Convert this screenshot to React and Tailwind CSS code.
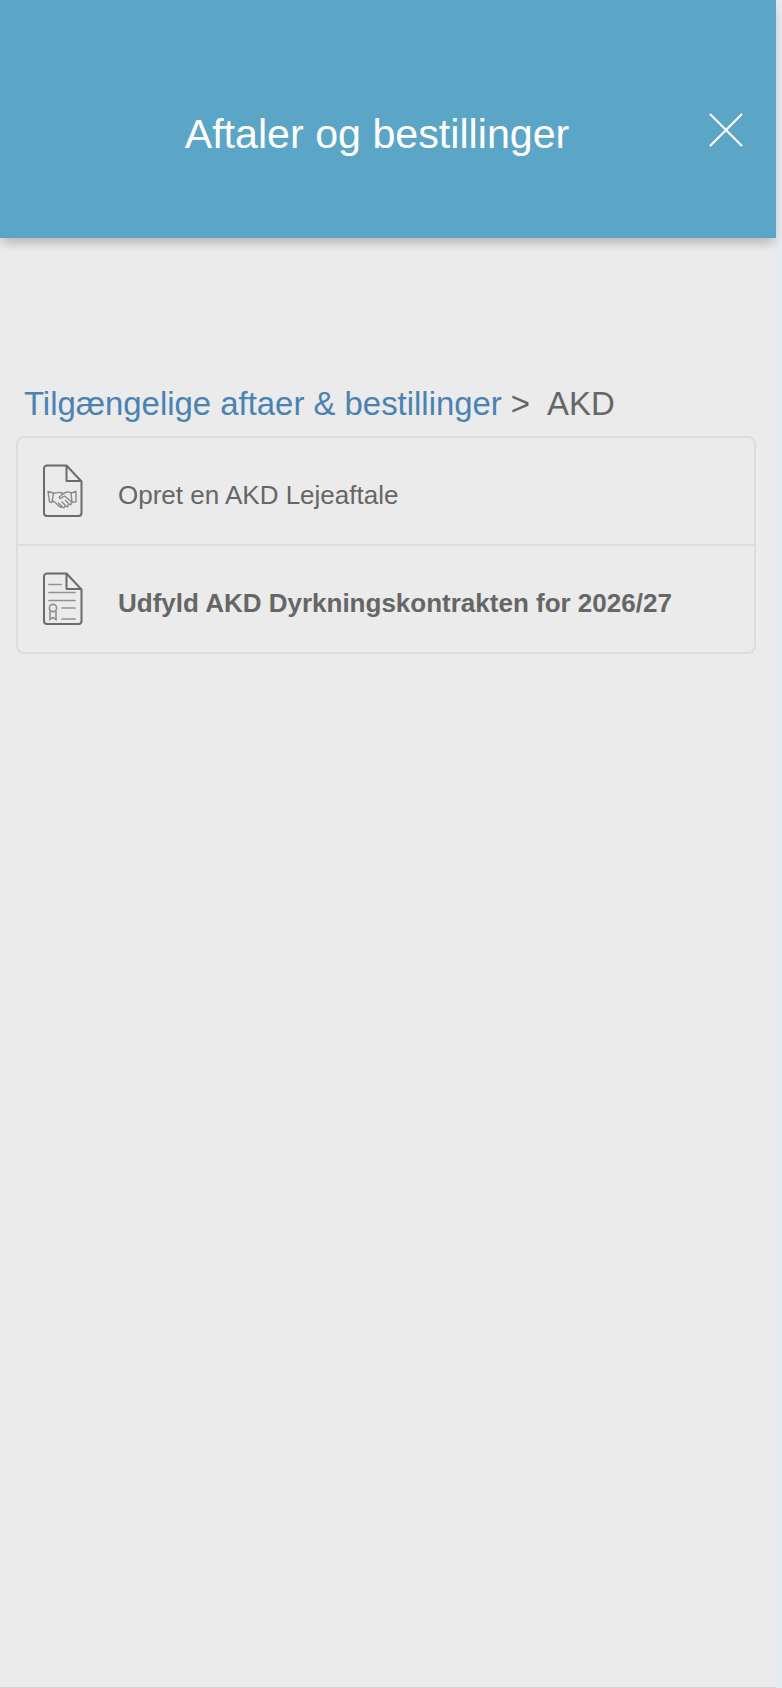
const DocBase = ({ children }) => (
  <svg width="42" height="54" viewBox="0 0 42 54" fill="none" className="shrink-0">
    <path d="M5 1.5h19.5L39.5 17.5V49a3 3 0 0 1-3 3H5a3 3 0 0 1-3-3V4.5a3 3 0 0 1 3-3z" stroke="#6b6b6b" strokeWidth="2" strokeLinejoin="round" />
    <path d="M24.5 1.5V17H39.5" stroke="#6b6b6b" strokeWidth="2" strokeLinejoin="round" />
    {children}
  </svg>
);

const HandshakeDoc = () => (
  <DocBase>
    <g stroke="#8a8a8a" strokeWidth="1.4" strokeLinejoin="round" strokeLinecap="round" fill="none">
      <path d="M6 27.5l5.5 1.5-1.5 9.5-2.5-.6z" />
      <path d="M34 27.5l-5 1.5 1 9.5 4-.6z" />
      <path d="M11.5 29.5c2.5-.4 4.5-1.5 6.5-1 1.5.4 2.5 1 3.5 1l3.5-1.5c1.5-.5 2.5.5 4 1" />
      <path d="M21.5 29.5l-4 3.2c-.8 1 .6 2.2 1.6 1.5l3.4-2.2 7.5 6" />
      <path d="M10 37l2 .5 6 5.5c1 .8 2.2-.2 1.6-1.2M16.5 39l4.5 4.5c1 .8 2.2-.3 1.5-1.3M20 38l4.5 4.5c1 .7 2.2-.4 1.4-1.5M23.5 36.5l4 4c1 .7 2.2-.4 1.5-1.5" />
    </g>
  </DocBase>
);

const ContractDoc = () => (
  <DocBase>
    <g stroke="#929292" strokeWidth="1.7" strokeLinecap="round" fill="none">
      <path d="M7 12.5h12M7 20.5h26M7 28.5h26M20 36h13M20 47h13" />
      <circle cx="11" cy="36" r="3.6" />
      <path d="M8 39.5V47.5l3-2 3 2v-8" />
    </g>
  </DocBase>
);

const Row = ({ icon, bold, last, children }) => (
  <div className={`flex items-center pl-[24px] ${last ? "h-[106px]" : "h-[108px] border-b-2 border-[#dcdcdc]"}`}>
    {icon}
    <span className={`ml-[34px] mt-[9px] text-[26px] text-[#666] ${bold ? "font-bold" : ""}`}>{children}</span>
  </div>
);

export default function App() {
  return (
    <div className="w-[782px] h-[1688px] bg-[#e6eaf4] font-['Liberation_Sans',Arial,sans-serif] overflow-hidden">
      <div className="w-[776px] h-[1687px] bg-[#ebebeb] border-b border-[#d4d4d4] box-content">
        <header className="relative h-[238px] bg-[#5ba6c7] flex items-center justify-center pr-[22px] pt-[32px] shadow-[0_7px_10px_-2px_rgba(0,0,0,0.22)]">
          <h1 className="text-[41.2px] leading-none text-white font-normal">Aftaler og bestillinger</h1>
          <svg width="34" height="34" viewBox="0 0 34 34" className="absolute left-[709px] top-[113px]" stroke="#fff" strokeWidth="2.2" fill="none">
            <path d="M1 1l32 32M33 1L1 33" />
          </svg>
        </header>
        <div className="pt-[146px] px-[16px]">
          <p className="pl-[8px] text-[32.9px] leading-[40px] text-[#666]">
            <span className="text-[#4a82b4]">Tilgængelige aftaer &amp; bestillinger</span>
            <span className="ml-[9px]">&gt;</span>
            <span className="ml-[17px]">AKD</span>
          </p>
          <div className="mt-[12px] w-[740px] border-2 border-[#dcdcdc] rounded-[8px]">
            <Row icon={<HandshakeDoc />}>Opret en AKD Lejeaftale</Row>
            <Row icon={<ContractDoc />} bold last>Udfyld AKD Dyrkningskontrakten for 2026/27</Row>
          </div>
        </div>
      </div>
    </div>
  );
}
